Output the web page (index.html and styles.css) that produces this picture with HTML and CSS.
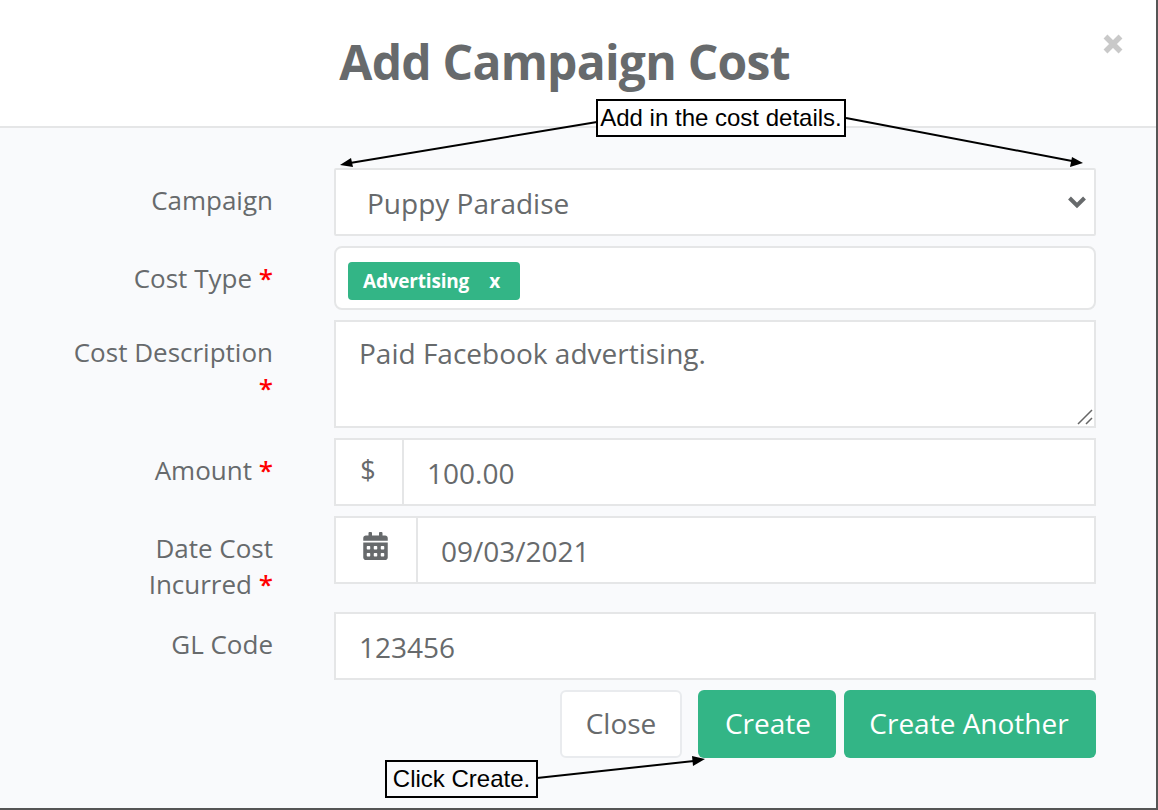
FILE: index.html
```html
<!DOCTYPE html>
<html lang="en">
<head>
<meta charset="utf-8">
<title>Add Campaign Cost</title>
<link rel="stylesheet" href="styles.css">
</head>
<body>
<div class="modal">
  <header class="modal-header">
    <h1 class="modal-title">Add Campaign Cost</h1>
    <svg class="close-icon" viewBox="0 0 20 20" width="20" height="20" aria-label="Close">
      <path d="M2.5 2.5 L17.5 17.5 M17.5 2.5 L2.5 17.5" />
    </svg>
  </header>
  <main class="modal-body">
    <div class="row">
      <div class="label">Campaign</div>
      <div class="control select">
        <span>Puppy Paradise</span>
        <svg class="chevron" viewBox="0 0 20 14" width="20" height="14"><path d="M2.5 3 L10 10.5 L17.5 3" /></svg>
      </div>
    </div>
    <div class="row">
      <div class="label">Cost Type <span class="req">*</span></div>
      <div class="control tags">
        <span class="tag"><span>Advertising</span><span class="tag-x">x</span></span>
      </div>
    </div>
    <div class="row">
      <div class="label">Cost Description <span class="req">*</span></div>
      <div class="control textarea">
        <span>Paid Facebook advertising.</span>
        <svg class="grip" viewBox="0 0 16 16" width="16" height="16"><path d="M1 15 L15 1 M9 15 L15 9" /></svg>
      </div>
    </div>
    <div class="row">
      <div class="label">Amount <span class="req">*</span></div>
      <div class="control group">
        <div class="addon addon-dollar">$</div>
        <div class="group-value">100.00</div>
      </div>
    </div>
    <div class="row">
      <div class="label">Date Cost Incurred <span class="req">*</span></div>
      <div class="control group">
        <div class="addon addon-date">
          <svg viewBox="0 0 448 512" width="25" height="28"><path d="M0 464c0 26.5 21.5 48 48 48h352c26.5 0 48-21.5 48-48V192H0v272zm320-196c0-6.6 5.4-12 12-12h40c6.6 0 12 5.4 12 12v40c0 6.6-5.4 12-12 12h-40c-6.6 0-12-5.4-12-12v-40zm0 128c0-6.6 5.4-12 12-12h40c6.6 0 12 5.4 12 12v40c0 6.6-5.4 12-12 12h-40c-6.6 0-12-5.4-12-12v-40zM192 268c0-6.6 5.4-12 12-12h40c6.6 0 12 5.4 12 12v40c0 6.6-5.4 12-12 12h-40c-6.6 0-12-5.4-12-12v-40zm0 128c0-6.6 5.4-12 12-12h40c6.6 0 12 5.4 12 12v40c0 6.6-5.4 12-12 12h-40c-6.6 0-12-5.4-12-12v-40zM64 268c0-6.6 5.4-12 12-12h40c6.6 0 12 5.4 12 12v40c0 6.6-5.4 12-12 12H76c-6.6 0-12-5.4-12-12v-40zm0 128c0-6.6 5.4-12 12-12h40c6.6 0 12 5.4 12 12v40c0 6.6-5.4 12-12 12H76c-6.6 0-12-5.4-12-12v-40zM400 64h-48V16c0-8.8-7.2-16-16-16h-32c-8.8 0-16 7.2-16 16v48H160V16c0-8.8-7.2-16-16-16h-32c-8.8 0-16 7.2-16 16v48H48C21.5 64 0 85.5 0 112v48h448v-48c0-26.5-21.5-48-48-48z"/></svg>
        </div>
        <div class="group-value group-value-date">09/03/2021</div>
      </div>
    </div>
    <div class="row">
      <div class="label">GL Code</div>
      <div class="control plain">123456</div>
    </div>
    <div class="actions">
      <div class="btn btn-close">Close</div>
      <div class="btn btn-primary btn-create">Create</div>
      <div class="btn btn-primary btn-another">Create Another</div>
    </div>
  </main>

  <svg class="arrows" viewBox="0 0 1156 808" width="1156" height="808">
    <g class="arrow-line">
      <line x1="597" y1="122" x2="350" y2="163" />
      <line x1="846" y1="118" x2="1072" y2="161" />
      <line x1="537" y1="778" x2="694" y2="761" />
    </g>
    <polygon points="340,165 351,158 353,167" />
    <polygon points="1083,163 1070,167 1072,157" />
    <polygon points="705,759 693,766 692,756" />
  </svg>
  <div class="callout callout-details">Add in the cost details.</div>
  <div class="callout callout-create">Click Create.</div>
</div>
</body>
</html>
```
FILE: styles.css
```css
* { box-sizing: border-box; }
html, body { margin: 0; padding: 0; background: #fff; }
body { font-family: "Open Sans", sans-serif; color: #676a6c; }

.modal {
  position: relative;
  width: 1158px;
  height: 810px;
  border-right: 2px solid #555;
  border-bottom: 2px solid #555;
  background: #f9fafc;
  overflow: hidden;
}

.modal-header {
  display: flex;
  align-items: flex-start;
  height: 128px;
  padding: 0 33px 0 26px;
  background: #fff;
  border-bottom: 2px solid #e5e6e7;
}
.modal-title {
  flex: 1;
  margin: 28px 0 0;
  font-size: 48px;
  line-height: 68px;
  font-weight: 700;
  letter-spacing: -0.75px;
  text-align: center;
}
.close-icon { margin-top: 34px; fill: none; stroke: #c9c9c9; stroke-width: 5.5; }

.modal-body {
  display: flex;
  flex-direction: column;
  gap: 10px;
  padding: 40px 0 0 62px;
}

.row { display: flex; align-items: flex-start; gap: 61px; }
.label {
  width: 211px;
  padding-top: 14px;
  font-size: 26px;
  line-height: 36px;
  text-align: right;
}
.req { color: #f00; font-weight: 600; }

.control {
  width: 762px;
  height: 68px;
  background: #fff;
  border: 2px solid #e5e6e7;
  font-size: 28px;
  line-height: 64px;
}
.select {
  display: flex;
  align-items: center;
  justify-content: space-between;
  padding: 2px 7px 0 31px;
  border-radius: 2px;
}
.chevron { fill: none; stroke: #676a6c; stroke-width: 4; margin-top: -2px; }
.tags {
  display: flex;
  align-items: flex-start;
  height: 64px;
  padding: 14px 12px 0;
  border-radius: 8px;
}
.tag {
  display: flex;
  justify-content: space-between;
  align-items: center;
  width: 172px;
  height: 38px;
  padding: 0 20px 0 15px;
  background: #33b586;
  border-radius: 4px;
  color: #fff;
  font-size: 19px;
  line-height: 38px;
  font-weight: 700;
  letter-spacing: -0.2px;
}
.textarea {
  position: relative;
  height: 108px;
  padding: 0 23px;
  line-height: 62px;
}
.grip {
  position: absolute;
  right: 1px;
  bottom: 1px;
  fill: none;
  stroke: #666;
  stroke-width: 1.5;
}
.group { display: flex; }
.addon {
  display: flex;
  justify-content: center;
  flex: none;
  border-right: 2px solid #e5e6e7;
}
.addon-dollar { width: 68px; font-size: 27px; line-height: 60px; padding-right: 2px; }
.addon-date { width: 82px; padding: 14px 2px 0 0; }
.addon-date svg { fill: #676a6c; }
.group-value { padding: 1px 23px 0; }
.plain { padding: 1px 23px 0; }

.actions {
  display: flex;
  justify-content: flex-end;
  gap: 8px;
  width: 1034px;
}
.btn {
  height: 68px;
  border-radius: 6px;
  font-size: 28px;
  line-height: 66px;
  text-align: center;
}
.btn-close { width: 122px; margin-right: 8px; background: #fff; border: 2px solid #e9ebee; line-height: 62px; }
.btn-primary { background: #33b586; color: #fff; }
.btn-create { width: 138px; padding-left: 2px; }
.btn-another { width: 252px; padding-right: 2px; }

.arrows { position: absolute; left: 0; top: 0; pointer-events: none; }
.arrows polygon { fill: #000; }
.arrow-line line { stroke: #000; stroke-width: 2; }

.callout {
  position: absolute;
  height: 38px;
  background: #fff;
  border: 2px solid #000;
  color: #000;
  font-family: "Liberation Sans", Arial, sans-serif;
  font-size: 24px;
  line-height: 34px;
  text-align: center;
  white-space: nowrap;
}
.callout-details { left: 596px; top: 99px; width: 250px; }
.callout-create { left: 385px; top: 760px; width: 153px; background: #f9fafc; }
```
